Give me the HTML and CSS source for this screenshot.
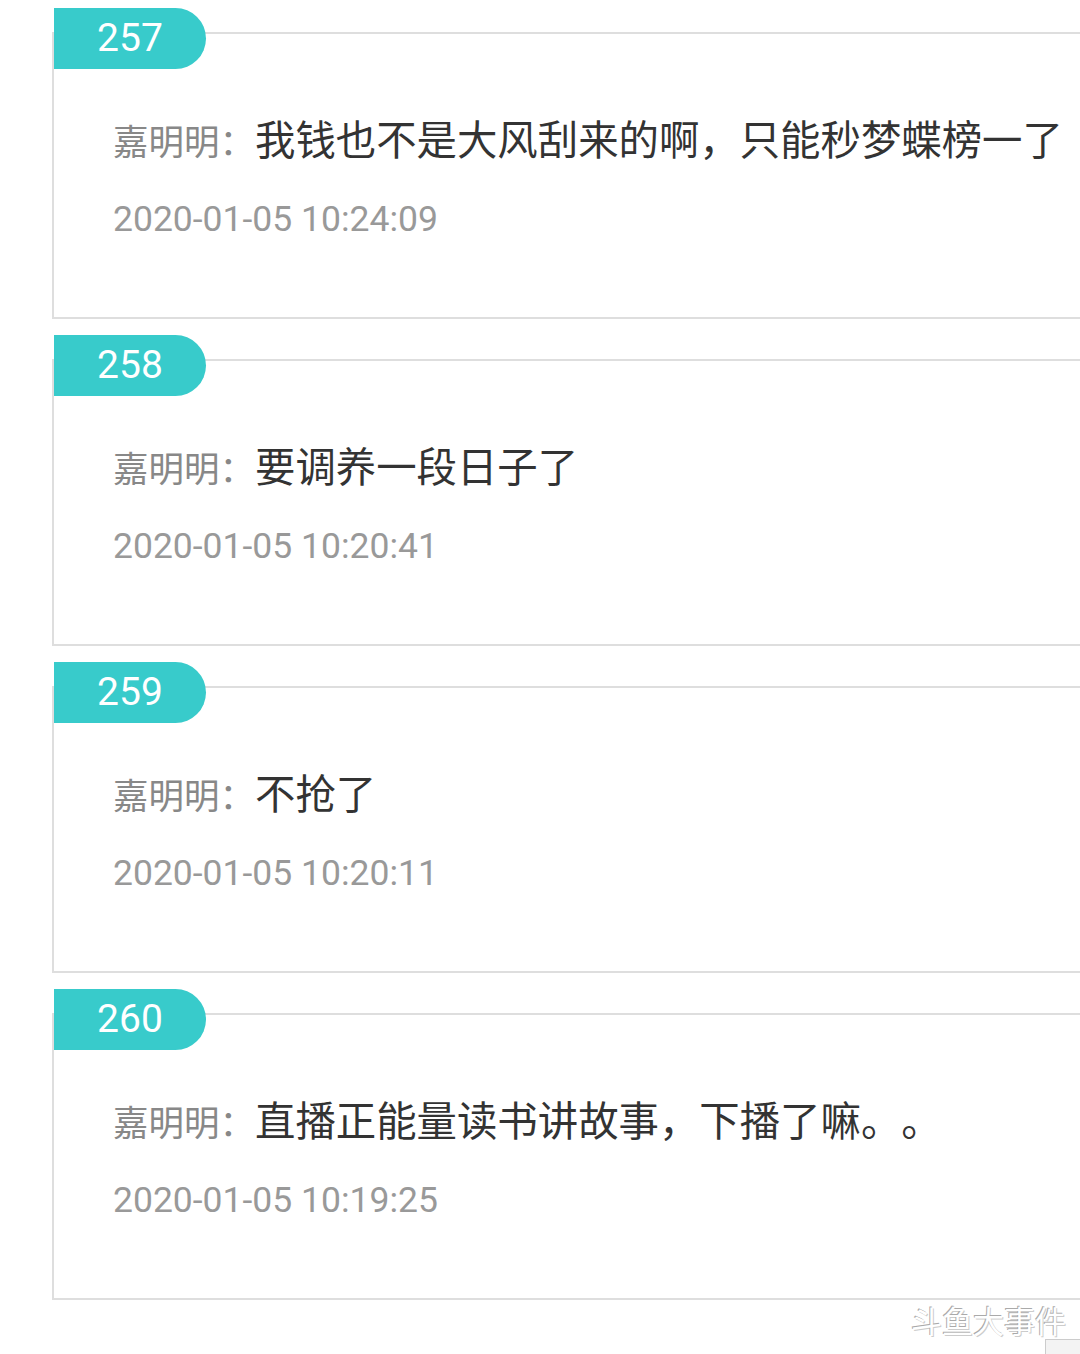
FILE: index.html
```html
<!DOCTYPE html>
<html>
    <head>
        <title>留言列表</title>
        <link rel="stylesheet" href="styles.css">
    </head>
    <body>
        <div class="list">
            <div class="item">
                <div class="tab">257</div>
                <p class="msg"><span class="name">嘉明明：</span>我钱也不是大风刮来的啊，只能秒梦蝶榜一了</p>
                <p class="time">2020-01-05 10:24:09</p>
            </div>
            <div class="item">
                <div class="tab">258</div>
                <p class="msg"><span class="name">嘉明明：</span>要调养一段日子了</p>
                <p class="time">2020-01-05 10:20:41</p>
            </div>
            <div class="item">
                <div class="tab">259</div>
                <p class="msg"><span class="name">嘉明明：</span>不抢了</p>
                <p class="time">2020-01-05 10:20:11</p>
            </div>
            <div class="item">
                <div class="tab">260</div>
                <p class="msg"><span class="name">嘉明明：</span>直播正能量读书讲故事，下播了嘛。。</p>
                <p class="time">2020-01-05 10:19:25</p>
            </div>
        </div>

        <!-- watermark + corner of the next block -->
        <div class="watermark">斗鱼大事件</div>
        <div class="corner"></div>
    </body>
</html>
```

FILE: styles.css
```css
html, body {
    margin: 0;
    height: 1354px;
    overflow: hidden;
    background-color: #fff;
}
body {
    position: relative;
    font-family: "Noto Sans CJK SC", "Noto Sans", sans-serif;
}
.list {
    display: flex;
    flex-direction: column;
    gap: 40px;
    padding-top: 32px;
    padding-left: 52px;
}
.item {
    position: relative;
    width: 969px;
    height: 207px;
    border: 2px solid #dedede;
    border-right: none;
    padding: 76px 0 0 59px;
}
.tab {
    position: absolute;
    top: -26px;
    left: 0;
    width: 152px;
    height: 61px;
    line-height: 61px;
    background-color: #38cbcb;
    border-radius: 0 31px 31px 0;
    color: #fff;
    font-family: Roboto, "Liberation Sans", sans-serif;
    font-size: 39px;
    text-align: center;
}
.msg {
    margin: 0;
    font-size: 40.4px;
    line-height: 56px;
    color: #333;
    white-space: nowrap;
    text-spacing-trim: space-all;
}
.name {
    font-size: 35.5px;
    color: #888;
}
.time {
    margin: 26px 0 0 0;
    font-family: Roboto, "Liberation Sans", sans-serif;
    font-size: 35.5px;
    line-height: 50px;
    color: #999;
}
.watermark {
    position: absolute;
    right: 14px;
    top: 1297px;
    font-size: 31px;
    color: #fff;
    text-shadow: -1px -1px 0 #aaa, 1px 1px 0 #ccc;
}
.corner {
    position: absolute;
    left: 1045px;
    top: 1339px;
    width: 40px;
    height: 20px;
    background-color: #f3f3f3;
    border: 1px solid #ccc;
}
```
